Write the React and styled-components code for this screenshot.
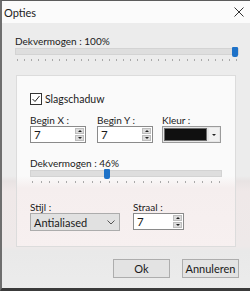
import styled, { createGlobalStyle } from "styled-components";

const GlobalStyle = createGlobalStyle`
  html, body {
    margin: 0;
    padding: 0;
    background: #e9e9e9;
  }
  body {
    font-family: Lato, "Noto Sans", sans-serif;
    font-size: 10px;
    color: #1a1a1a;
  }
`;

const Window = styled.div`
  width: 250px;
  height: 291px;
  box-sizing: border-box;
  border-left: 2px solid #6e6e6e;
  border-top: 1px solid #5c5c5c;
  border-bottom: 3px solid #3a3a3a;
  display: flex;
  flex-direction: column;
  background: linear-gradient(
    to bottom,
    #ececec 0px,
    #ececec 175px,
    #e8e3e3 180px,
    #efe8e8 190px,
    #eee9e9 245px,
    #e9e9e9 250px,
    #ececec 291px
  );
`;

const TitleBar = styled.div`
  height: 22px;
  background: #fbfbfb;
  display: flex;
  align-items: center;
  justify-content: space-between;
  padding: 0 6px 0 2px;
`;

const Title = styled.span`
  font-size: 11px;
  color: #222;
`;

const Close = styled.span`
  width: 10px;
  height: 10px;
  display: flex;
`;

const Body = styled.div`
  flex: 1;
  padding: 12px 11px 0 13px;
  display: flex;
  flex-direction: column;
`;

const Label = styled.div`
  line-height: 12px;
  height: 12px;
  white-space: nowrap;
`;

const SliderWrap = styled.div`
  position: relative;
  margin-top: ${(p) => p.$top}px;
  width: ${(p) => p.$w || "auto"};
  height: 15px;
`;

const Track = styled.div`
  height: 7px;
  background: #dedede;
  border: 1px solid #d3d3d3;
  box-sizing: border-box;
`;

const Thumb = styled.div`
  position: absolute;
  top: -1px;
  width: 6px;
  height: 10px;
  background: #1e72c8;
  border-radius: 1px 1px 2px 2px;
`;

const Ticks = styled.div`
  display: flex;
  justify-content: space-between;
  margin-top: 4px;
  padding: 0 2px;
`;

const Tick = styled.span`
  width: 1px;
  height: 2px;
  background: #a9a9a9;
`;

const Panel = styled.div`
  margin: 12px 0 0 1px;
  width: 220px;
  height: 172px;
  box-sizing: border-box;
  border: 1px solid #dcdcdc;
  background: linear-gradient(
    to bottom,
    #fafafa 0px,
    #fafafa 100px,
    #f5eeee 112px,
    #f7f0f0 172px
  );
  padding: 17px 0 0 13px;
  display: flex;
  flex-direction: column;
`;

const CheckRow = styled.label`
  display: flex;
  align-items: center;
  gap: 3px;
  height: 12px;
  font-size: 10.5px;
`;

const CheckBox = styled.span`
  width: 10px;
  height: 10px;
  border: 1px solid #333;
  background: #fff;
  display: flex;
  align-items: center;
  justify-content: center;
`;

const FieldRow = styled.div`
  display: flex;
  margin-top: ${(p) => p.$top}px;
`;

const Field = styled.div`
  display: flex;
  flex-direction: column;
  width: ${(p) => p.$w}px;
`;

const Spin = styled.div`
  display: flex;
  width: ${(p) => p.$w}px;
  height: 17px;
  box-sizing: border-box;
  border: 1px solid #8a8a8a;
  background: #fff;
`;

const SpinValue = styled.div`
  flex: 1;
  padding-left: 3px;
  font-size: 11.5px;
  line-height: 15px;
`;

const SpinButtons = styled.div`
  width: 9px;
  display: flex;
  flex-direction: column;
  gap: 1px;
  padding: 1px 1px 1px 0;
`;

const SpinButton = styled.div`
  flex: 1;
  background: #dcdcdc;
  border: 1px solid #bdbdbd;
  display: flex;
  align-items: center;
  justify-content: center;
`;

const Arrow = styled.span`
  width: 0;
  height: 0;
  border-left: 2px solid transparent;
  border-right: 2px solid transparent;
  ${(p) =>
    p.$up
      ? "border-bottom: 2px solid #222;"
      : "border-top: 2px solid #222;"}
`;

const ColorBox = styled.div`
  display: flex;
  width: 59px;
  height: 17px;
  box-sizing: border-box;
  border: 1px solid #9b9b9b;
  background: #e6e6e6;
  padding: 1px;
  gap: 2px;
`;

const Swatch = styled.div`
  width: 41px;
  background: #101010;
  border: 1px solid #6c6c6c;
`;

const DropButton = styled.div`
  flex: 1;
  background: #f1f1f1;
  display: flex;
  align-items: center;
  justify-content: center;
`;

const Select = styled.div`
  width: 90px;
  height: 18px;
  box-sizing: border-box;
  border: 1px solid #acacac;
  background: #e1e1e1;
  display: flex;
  align-items: center;
  justify-content: space-between;
  padding: 0 4px 0 3px;
  font-size: 11px;
`;

const Footer = styled.div`
  display: flex;
  justify-content: flex-end;
  gap: 12px;
  margin-top: 12px;
`;

const Button = styled.button`
  width: 57px;
  height: 19px;
  box-sizing: border-box;
  border: 1px solid #adadad;
  background: #e3e3e3;
  font-family: inherit;
  font-size: 11px;
  color: #1a1a1a;
  padding: 0;
`;

const Slider = ({ top, pos, ticks, w }) => (
  <SliderWrap $top={top} $w={w}>
    <Track />
    <Thumb style={{ left: pos }} />
    <Ticks>
      {Array.from({ length: ticks }).map((_, i) => (
        <Tick key={i} />
      ))}
    </Ticks>
  </SliderWrap>
);

const SpinBox = ({ w, value }) => (
  <Spin $w={w}>
    <SpinValue>{value}</SpinValue>
    <SpinButtons>
      <SpinButton>
        <Arrow $up />
      </SpinButton>
      <SpinButton>
        <Arrow />
      </SpinButton>
    </SpinButtons>
  </Spin>
);

export default function App() {
  return (
    <>
      <GlobalStyle />
      <Window>
        <TitleBar>
          <Title>Opties</Title>
          <Close>
            <svg width="10" height="10" viewBox="0 0 10 10">
              <path d="M0.5 0.5 L9.5 9.5 M9.5 0.5 L0.5 9.5" stroke="#333" strokeWidth="1" />
            </svg>
          </Close>
        </TitleBar>
        <Body>
          <Label>Dekvermogen : 100%</Label>
          <Slider top={1} pos={217} ticks={32} />
          <Panel>
            <CheckRow>
              <CheckBox>
                <svg width="8" height="8" viewBox="0 0 8 8">
                  <path d="M0.5 4 L3 6.5 L7.5 1" stroke="#222" strokeWidth="1" fill="none" />
                </svg>
              </CheckBox>
              Slagschaduw
            </CheckRow>
            <FieldRow $top={9}>
              <Field $w={67}>
                <Label>Begin X :</Label>
                <SpinBox w={56} value="7" />
              </Field>
              <Field $w={65}>
                <Label>Begin Y :</Label>
                <SpinBox w={56} value="7" />
              </Field>
              <Field $w={60}>
                <Label>Kleur :</Label>
                <ColorBox>
                  <Swatch />
                  <DropButton>
                    <Arrow />
                  </DropButton>
                </ColorBox>
              </Field>
            </FieldRow>
            <Label style={{ marginTop: 14 }}>Dekvermogen : 46%</Label>
            <Slider top={1} pos={74} ticks={23} w="192px" />
            <FieldRow $top={16}>
              <Field $w={103}>
                <Label>Stijl :</Label>
                <Select>
                  Antialiased
                  <svg width="8" height="5" viewBox="0 0 8 5">
                    <path d="M0.5 0.5 L4 4 L7.5 0.5" stroke="#555" strokeWidth="1" fill="none" />
                  </svg>
                </Select>
              </Field>
              <Field $w={60}>
                <Label>Straal :</Label>
                <SpinBox w={51} value="7" />
              </Field>
            </FieldRow>
          </Panel>
          <Footer>
            <Button>Ok</Button>
            <Button>Annuleren</Button>
          </Footer>
        </Body>
      </Window>
    </>
  );
}
